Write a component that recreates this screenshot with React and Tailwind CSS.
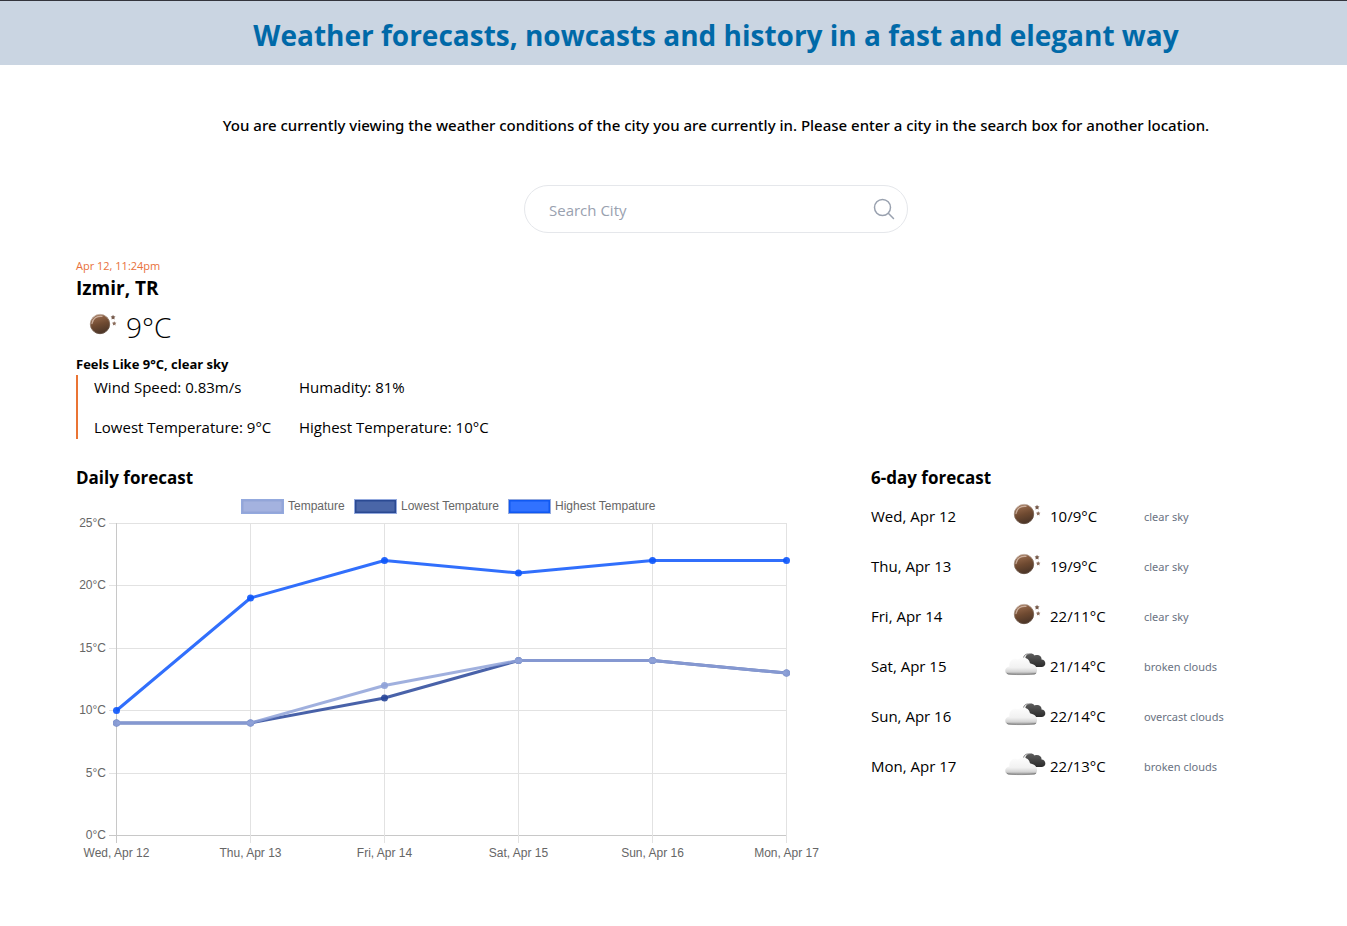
import React from "react";

const days = [
  { date: "Wed, Apr 12", temp: 9, min: 9, max: 10, text: "clear sky", icon: "moon" },
  { date: "Thu, Apr 13", temp: 9, min: 9, max: 19, text: "clear sky", icon: "moon" },
  { date: "Fri, Apr 14", temp: 12, min: 11, max: 22, text: "clear sky", icon: "moon" },
  { date: "Sat, Apr 15", temp: 14, min: 14, max: 21, text: "broken clouds", icon: "cloud" },
  { date: "Sun, Apr 16", temp: 14, min: 14, max: 22, text: "overcast clouds", icon: "cloud" },
  { date: "Mon, Apr 17", temp: 13, min: 13, max: 22, text: "broken clouds", icon: "cloud" },
];

function Gradients() {
  return (
    <svg width="0" height="0" className="absolute" aria-hidden="true">
      <defs>
        <linearGradient id="moonFill" x1="0" y1="0" x2="0.3" y2="1">
          <stop offset="0" stopColor="#b08a72" />
          <stop offset="0.3" stopColor="#8a5f43" />
          <stop offset="0.6" stopColor="#6f4a31" />
          <stop offset="1" stopColor="#4f3728" />
        </linearGradient>
        <linearGradient id="moonRim" x1="0" y1="0" x2="0.4" y2="1">
          <stop offset="0" stopColor="#e0d3ca" />
          <stop offset="0.5" stopColor="#8f7665" />
          <stop offset="1" stopColor="#5d483b" />
        </linearGradient>
        <linearGradient id="cloudFill" x1="0" y1="0" x2="0" y2="1">
          <stop offset="0" stopColor="#fdfdfd" />
          <stop offset="0.6" stopColor="#f1f1f1" />
          <stop offset="0.85" stopColor="#d2d2d2" />
          <stop offset="1" stopColor="#8a8a8a" />
        </linearGradient>
        <linearGradient id="darkFill" x1="0" y1="0" x2="0" y2="1">
          <stop offset="0" stopColor="#5e5e5e" />
          <stop offset="1" stopColor="#2b2b2b" />
        </linearGradient>
      </defs>
    </svg>
  );
}

function MoonIcon() {
  return (
    <svg width="50" height="50" viewBox="0 0 50 50" className="shrink-0" aria-hidden="true">
      <circle cx="24" cy="22" r="9.7" fill="url(#moonFill)" stroke="url(#moonRim)" strokeWidth="0.9" />
      <path d="M16 21.5C16.600 16.500 21 13.800 26 14.300" fill="none" stroke="#d9c0b0" strokeWidth="1.300" strokeLinecap="round" opacity="0.8" />
      <path d="M37 12.800l.8 1.500 1.700.3-1.200 1.200.3 1.700-1.600-.8-1.500.8.3-1.700-1.200-1.200 1.700-.3z" fill="#75594a" />
      <path d="M38.200 19.300l.7 1.300 1.500.2-1.100 1.100.3 1.500-1.400-.7-1.300.7.2-1.500-1.100-1.100 1.500-.2z" fill="#8a6c5b" />
    </svg>
  );
}

function CloudIcon() {
  return (
    <svg width="50" height="50" viewBox="0 0 50 50" className="shrink-0" aria-hidden="true">
      <path d="M25.500 17C24.500 12 32 9.500 34.500 13.500C38.500 12 42 14.500 41.500 17.500C46 17.500 47 24.500 42 25H34C31 25 30 23.500 30.500 21.500C27.500 21.500 26 19.500 25.500 17Z" fill="url(#darkFill)" />
      <path d="M23.500 16C24 12.500 27 11.500 29.500 12.300" fill="none" stroke="#777" strokeWidth="1" />
      <path d="M8.500 32.500C3.500 31.500 4.500 25 9.500 24.500C8.500 18.500 14 15 18 17.500C22 13.500 29.500 15.500 30 21.500C35 22 38.500 26 36.500 30.500C36 32 35 32.500 33.500 32.500Z" fill="url(#cloudFill)" />
      <path d="M7 31.500C9 33 33 33 36 31.300" fill="none" stroke="#6f6f6f" strokeWidth="0.9" opacity="0.7" />
    </svg>
  );
}

const LEFT = 40.5;
const STEP = 134;
const BASE = 343.5;
const UNIT = 12.5;
const xAt = (i) => LEFT + i * STEP;
const yAt = (v) => BASE - v * UNIT;

const series = [
  { key: "max", line: "#0d56fb", opacity: 0.85 },
  { key: "min", line: "#29479a", opacity: 0.85 },
  { key: "temp", line: "#8fa2d8", opacity: 0.85 },
];

const legend = [
  { label: "Tempature", x: 165, fill: "#a4b2df", stroke: "#93a5d8" },
  { label: "Lowest Tempature", x: 278, fill: "#4a66a8", stroke: "#2b4a93" },
  { label: "Highest Tempature", x: 432, fill: "#3172ff", stroke: "#1059f2" },
];

function Chart() {
  return (
    <svg
      viewBox="0 0 750 375"
      className="block w-full font-['Liberation_Sans',Arial,sans-serif] text-[12px]"
      role="img"
      aria-label="Daily forecast chart"
    >
      {legend.map((l) => (
        <g key={l.label}>
          <rect x={l.x + 1.5} y="8.500" width="40" height="12" fill={l.fill} stroke={l.stroke} strokeWidth="2" />
          <rect x={l.x + 0.5} y="7.500" width="42" height="14" fill="none" stroke="#93a9de" strokeWidth="1" />
          <text x={l.x + 47} y="18" fill="#666">{l.label}</text>
        </g>
      ))}
      {[0, 5, 10, 15, 20, 25].map((v) => {
        const y = Math.floor(yAt(v)) + 0.5;
        return (
          <g key={v}>
            <line x1="33" x2="710.500" y1={y} y2={y} stroke={v === 0 ? "#c8c8c8" : "#e2e2e2"} />
            <text x="30" y={y + 3} textAnchor="end" fill="#666">{v}°C</text>
          </g>
        );
      })}
      {days.map((d, i) => (
        <g key={d.date}>
          <line x1={xAt(i)} x2={xAt(i)} y1="31" y2="351" stroke={i === 0 ? "#c8c8c8" : "#e2e2e2"} />
          <text x={xAt(i)} y="365" textAnchor="middle" fill="#666">{d.date}</text>
        </g>
      ))}
      {series.map((s) => (
        <g key={s.key}>
          <polyline
            points={days.map((d, i) => `${xAt(i)},${yAt(d[s.key])}`).join(" ")}
            fill="none"
            stroke={s.line}
            strokeWidth="3"
            strokeOpacity={s.opacity}
            strokeLinejoin="round"
          />
          {days.map((d, i) => (
            <circle key={d.date} cx={xAt(i)} cy={yAt(d[s.key])} r="3.500" fill={s.line} fillOpacity="0.9" />
          ))}
        </g>
      ))}
    </svg>
  );
}

export default function App() {
  return (
    <div className="min-h-screen bg-white font-['Open_Sans','Noto_Sans',sans-serif] text-black">
      <Gradients />
      <header className="border-t border-[#33343c] bg-slate-300 pt-4 pb-3 pl-[85px] text-center">
        <h1 className="text-[28px] leading-9 font-bold text-sky-700">
          Weather forecasts, nowcasts and history in a fast and elegant way
        </h1>
      </header>

      <main className="pl-[76px]">
        <p className="mt-12 pl-[9px] text-center font-['Noto_Sans',sans-serif] text-[15px] leading-6 font-medium">
          You are currently viewing the weather conditions of the city you are currently in. Please enter a city in the
          search box for another location.
        </p>

        <form className="mt-12 flex justify-center pl-[9px]" onSubmit={(e) => e.preventDefault()}>
          <div className="flex h-12 w-96 items-center rounded-full border border-gray-200 pr-3 pl-6">
            <input
              type="text"
              aria-label="Search City"
              placeholder="Search City"
              className="min-w-0 flex-1 bg-transparent pt-0.5 text-[15px] leading-6 outline-none placeholder:text-gray-400"
            />
            <button type="submit" aria-label="Search" className="text-gray-400">
              <svg width="22" height="22" viewBox="0 0 22 22" fill="none" stroke="currentColor" strokeWidth="1.500" strokeLinecap="round">
                <circle cx="9.500" cy="9.500" r="8" />
                <path d="M15.300 15.300L20.500 20.500" />
              </svg>
            </button>
          </div>
        </form>

        <section className="mt-[25px]">
          <p className="text-[11px] leading-4 font-medium text-[#e8703a]">Apr 12, 11:24pm</p>
          <h2 className="text-[19px] leading-7 font-bold">Izmir, TR</h2>
          <div className="flex h-[50px] items-center">
            <MoonIcon />
            <p className="text-[28px] leading-9 font-light">9°C</p>
          </div>
          <p className="mt-0.5 text-[13px] leading-5 font-bold">Feels Like 9°C, clear sky</p>
          <div className="mt-px grid grid-cols-[189px_1fr] gap-4 border-l-2 border-[#ea7434] pl-4 text-[15px] leading-6">
            <p>Wind Speed: 0.83m/s</p>
            <p>Humadity: 81%</p>
            <p>Lowest Temperature: 9°C</p>
            <p>Highest Temperature: 10°C</p>
          </div>
        </section>

        <div className="mt-[25px] grid grid-cols-[minmax(0,750px)_minmax(400px,1fr)] gap-[45px]">
          <section>
            <h2 className="text-[17px] leading-7 font-bold">Daily forecast</h2>
            <Chart />
          </section>
          <section>
            <h2 className="text-[17px] leading-7 font-bold">6-day forecast</h2>
            <table className="text-left">
              <tbody>
                {days.map((d) => (
                  <tr key={d.date} className="h-[50px]">
                    <th scope="row" className="w-[129px] p-0 pb-0.5 text-[15px] leading-6 font-normal">{d.date}</th>
                    <td className="w-[49px] p-0">{d.icon === "moon" ? <MoonIcon /> : <CloudIcon />}</td>
                    <td className="w-[94px] p-0 pb-0.5 text-[15px] leading-6">{d.max}/{d.min}°C</td>
                    <td className="p-0 font-['Noto_Sans',sans-serif] text-[11px] leading-4 text-gray-500">{d.text}</td>
                  </tr>
                ))}
              </tbody>
            </table>
          </section>
        </div>
      </main>
    </div>
  );
}
